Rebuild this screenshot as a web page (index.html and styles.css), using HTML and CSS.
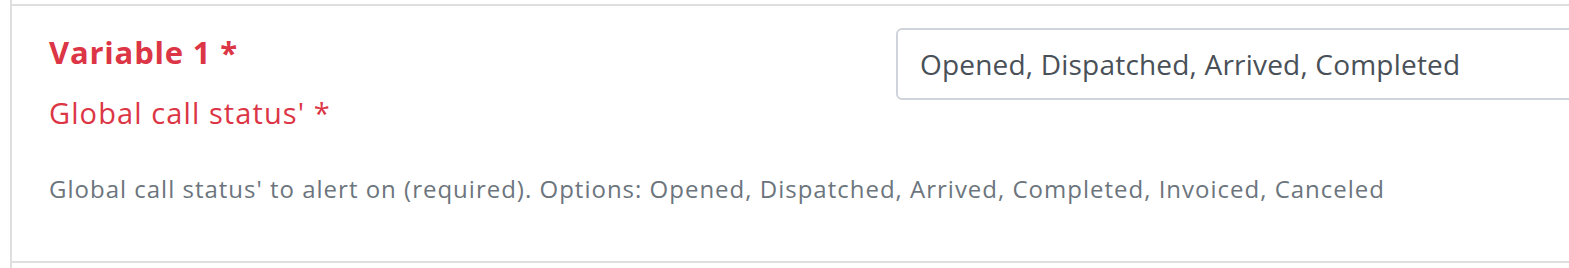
FILE: index.html
```html
<!DOCTYPE html>
<html lang="en">
<head>
<meta charset="utf-8">
<title>Variable 1</title>
<link rel="stylesheet" href="styles.css">
</head>
<body>
<div class="panel">
  <div class="field-row">
    <div class="field-labels">
      <h5 class="field-title">Variable 1 *</h5>
      <label class="field-label" for="v1">Global call status' *</label>
    </div>
    <div class="field-input">
      <input id="v1" class="form-control" type="text" value="Opened, Dispatched, Arrived, Completed">
    </div>
    <small class="field-help">Global call status' to alert on (required). Options: Opened, Dispatched, Arrived, Completed, Invoiced, Canceled</small>
  </div>
</div>
</body>
</html>
```

FILE: styles.css
```css
html, body {
  margin: 0;
  padding: 0;
  background: #ffffff;
  overflow: hidden;
  height: 268px;
}

body {
  font-family: "Open Sans", "Noto Sans", sans-serif;
}

.panel {
  margin-left: 10px;
  border-left: 2px solid #dfdfdf;
  padding-top: 4px;
  height: 264px;
}

.field-row {
  display: grid;
  grid-template-columns: 847px minmax(0, 1fr);
  align-content: start;
  align-items: start;
  border-top: 2px solid #dfdfdf;
  border-bottom: 2px solid #dfdfdf;
  padding: 0 0 0 37px;
  height: 255px;
  box-sizing: content-box;
}

.field-labels {
  padding-top: 27px;
}

.field-title {
  margin: 0;
  font-size: 31px;
  line-height: 38px;
  font-weight: 700;
  letter-spacing: 0.8px;
  color: #dc3545;
}

.field-label {
  display: block;
  margin-top: 22px;
  font-size: 29px;
  line-height: 40px;
  letter-spacing: 1.1px;
  color: #dc3545;
}

.field-input {
  padding-top: 22px;
  overflow: hidden;
}

.form-control {
  display: block;
  box-sizing: border-box;
  width: 900px;
  height: 72px;
  padding: 0 22px;
  border: 2px solid #ced4da;
  border-radius: 6px;
  font-family: inherit;
  font-size: 28px;
  letter-spacing: 0.2px;
  color: #495057;
  background: #ffffff;
  outline: none;
}

.field-help {
  grid-column: 1 / -1;
  display: block;
  margin-top: 39px;
  font-size: 24px;
  line-height: 34px;
  letter-spacing: 1px;
  color: #6c757d;
  white-space: nowrap;
}
```
